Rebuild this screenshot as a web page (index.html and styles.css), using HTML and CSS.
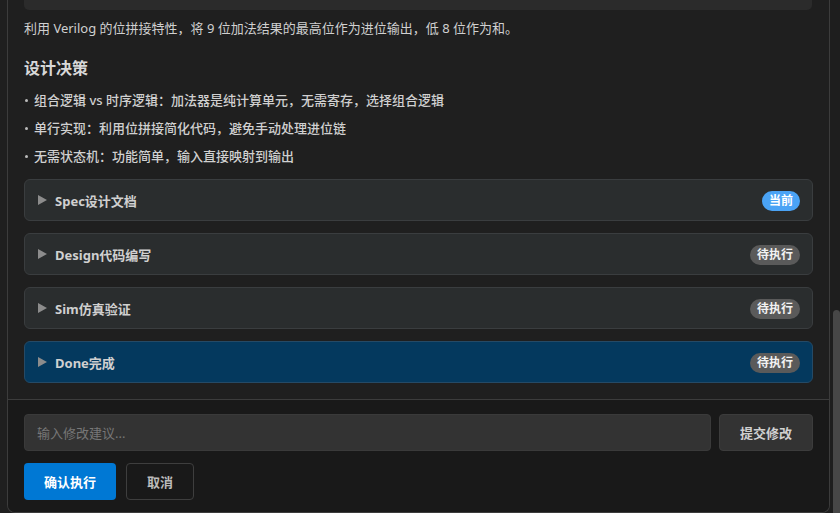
FILE: index.html
```html
<!DOCTYPE html>
<html lang="zh-CN">
<head>
<meta charset="utf-8">
<title>执行计划确认</title>
<link rel="stylesheet" href="styles.css">
</head>
<body>
<div class="page">
  <div class="dialog">
    <div class="content">
      <div class="code-tail"></div>
      <p class="para">利用 Verilog 的位拼接特性，将 9 位加法结果的最高位作为进位输出，低 8 位作为和。</p>
      <h3 class="heading">设计决策</h3>
      <ul class="list">
        <li><span class="dot"></span>组合逻辑 vs 时序逻辑：加法器是纯计算单元，无需寄存，选择组合逻辑</li>
        <li><span class="dot"></span>单行实现：利用位拼接简化代码，避免手动处理进位链</li>
        <li><span class="dot"></span>无需状态机：功能简单，输入直接映射到输出</li>
      </ul>
      <div class="stages">
        <div class="stage">
          <span class="caret"></span><span class="stage-name">Spec设计文档</span>
          <span class="badge badge-current">当前</span>
        </div>
        <div class="stage">
          <span class="caret"></span><span class="stage-name">Design代码编写</span>
          <span class="badge badge-pending">待执行</span>
        </div>
        <div class="stage">
          <span class="caret"></span><span class="stage-name">Sim仿真验证</span>
          <span class="badge badge-pending">待执行</span>
        </div>
        <div class="stage stage-active">
          <span class="caret"></span><span class="stage-name">Done完成</span>
          <span class="badge badge-pending">待执行</span>
        </div>
      </div>
    </div>
    <div class="footer">
      <div class="input-row">
        <input class="suggest" type="text" placeholder="输入修改建议...">
        <button class="btn btn-secondary">提交修改</button>
      </div>
      <div class="action-row">
        <button class="btn btn-primary">确认执行</button>
        <button class="btn btn-ghost">取消</button>
      </div>
    </div>
  </div>
  <div class="scrollbar"><div class="thumb"></div></div>
</div>
</body>
</html>
```

FILE: styles.css
```css
html, body {
  margin: 0;
  padding: 0;
  height: 513px;
  overflow: hidden;
  background: #1f1f1f;
  font-family: "Noto Sans", "Noto Sans CJK SC", sans-serif;
  color: #d0d0d0;
}

.page {
  display: flex;
  height: 513px;
  padding-left: 7px;
  box-sizing: border-box;
}

.dialog {
  width: 823px;
  height: 513px;
  box-sizing: border-box;
  border: 1px solid #3c3c3c;
  border-top: none;
  border-radius: 0 0 8px 8px;
  background: #1f1f1f;
  display: flex;
  flex-direction: column;
  overflow: hidden;
}

.content {
  padding: 0 16px 16px;
  border-bottom: 1px solid #3c3c3c;
}

.code-tail {
  height: 10px;
  background: #2b2b2b;
  border-radius: 0 0 5px 5px;
  margin-right: 1px;
}

.para {
  margin: 8px 0 0;
  font-size: 13px;
  line-height: 20px;
  color: #d0d0d0;
}

.heading {
  margin: 18px 0 0;
  font-size: 16px;
  line-height: 24px;
  font-weight: 700;
  color: #d8d8d8;
}

.list {
  list-style: none;
  margin: 10px 0 0;
  padding: 0;
  display: flex;
  flex-direction: column;
  gap: 8px;
}

.list li {
  display: flex;
  align-items: center;
  font-size: 13px;
  line-height: 20px;
  font-weight: 500;
  color: #d0d0d0;
}

.dot {
  width: 3px;
  height: 3px;
  background: #bbbbbb;
  border-radius: 50%;
  margin: 0 6px 0 1px;
}

.stages {
  margin-top: 13px;
  display: flex;
  flex-direction: column;
  gap: 12px;
}

.stage {
  height: 42px;
  box-sizing: border-box;
  border: 1px solid #3a3d3f;
  border-radius: 6px;
  background: #2a2d2e;
  display: flex;
  align-items: center;
  padding: 0 12px 0 13px;
}

.stage-active {
  background: #04395e;
  border-color: #254a66;
}

.caret {
  width: 0;
  height: 0;
  border-left: 9px solid #8c8c8c;
  border-top: 5px solid transparent;
  border-bottom: 5px solid transparent;
  margin-right: 8px;
}

.stage-name {
  flex: 1;
  font-size: 13px;
  font-weight: 700;
  color: #d0d0d0;
}

.badge {
  height: 20px;
  line-height: 20px;
  margin-top: 1px;
  border-radius: 10px;
  padding: 0 7px;
  font-size: 12px;
  font-weight: 700;
  color: #ffffff;
}

.badge-current {
  background: #4aa3f5;
}

.badge-pending {
  background: #5a5a5a;
  color: #f2f2f2;
}

.footer {
  flex: 1;
  background: #191919;
  padding: 14px 16px 12px;
  display: flex;
  flex-direction: column;
  gap: 12px;
}

.input-row {
  display: flex;
  gap: 8px;
}

.suggest {
  flex: 1;
  height: 37px;
  box-sizing: border-box;
  background: #333333;
  border: 1px solid #3a3a3a;
  border-radius: 4px;
  padding: 0 12px;
  font-family: inherit;
  font-size: 13px;
  color: #cccccc;
  outline: none;
}

.suggest::placeholder {
  color: #777777;
}

.btn {
  height: 37px;
  box-sizing: border-box;
  border-radius: 4px;
  font-family: inherit;
  font-size: 13px;
  font-weight: 700;
  cursor: pointer;
}

.btn-secondary {
  width: 94px;
  background: #333333;
  border: 1px solid #3c3c3c;
  color: #d0d0d0;
}

.action-row {
  display: flex;
  gap: 10px;
}

.btn-primary {
  width: 92px;
  background: #0078d4;
  border: none;
  color: #ffffff;
}

.btn-ghost {
  width: 68px;
  background: transparent;
  border: 1px solid #3e3e3e;
  color: #bbbbbb;
}

.scrollbar {
  width: 10px;
  height: 513px;
  position: relative;
  background: #1e1e1e;
}

.thumb {
  position: absolute;
  left: 3px;
  right: 0;
  top: 310px;
  bottom: 0;
  background: #474747;
  border-radius: 4px 4px 0 0;
}
```
